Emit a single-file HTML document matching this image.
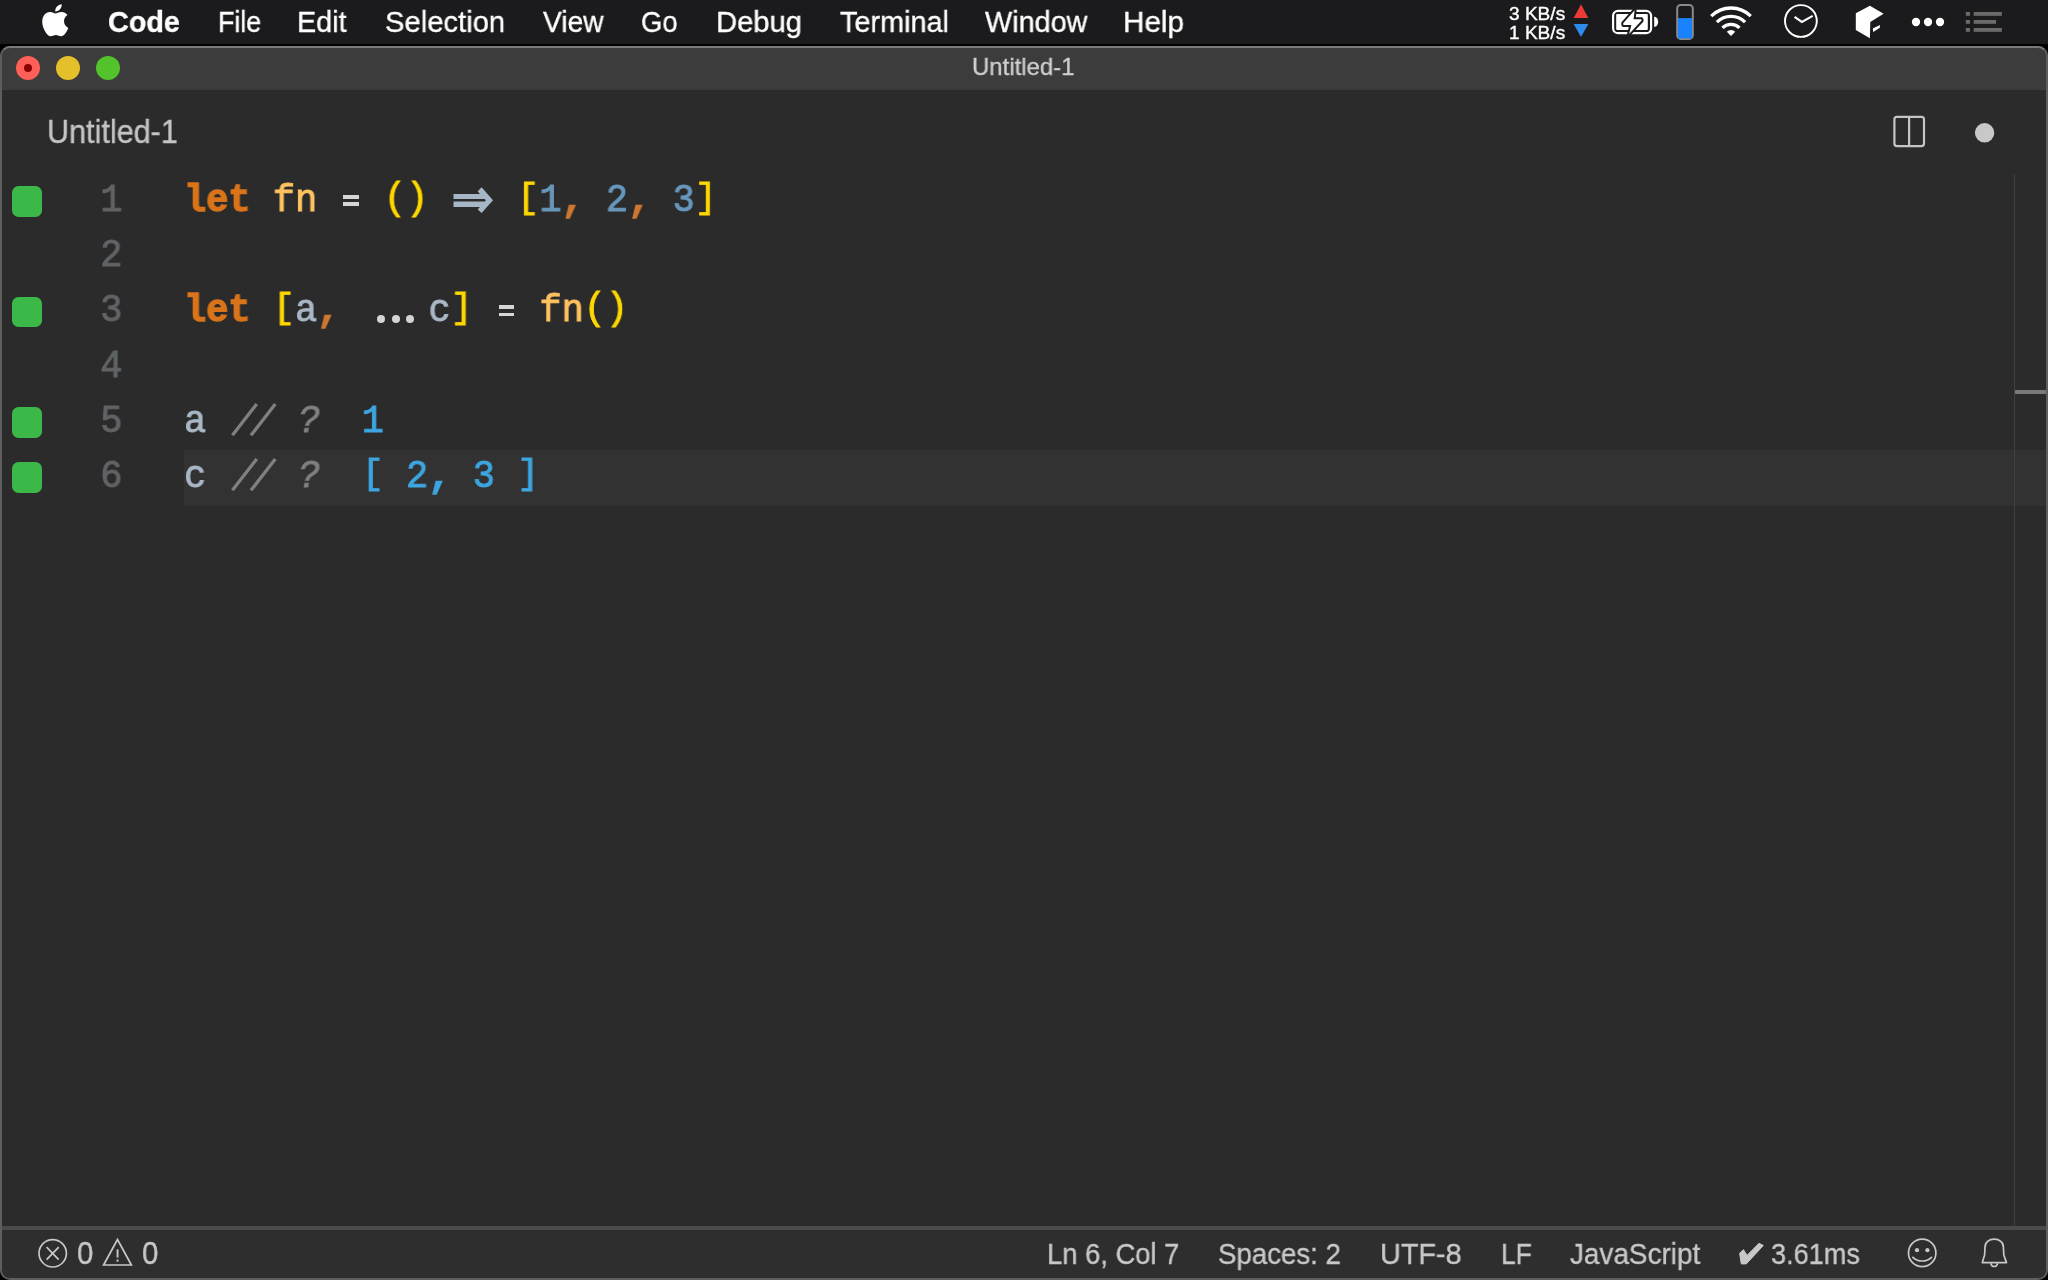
<!DOCTYPE html>
<html><head><meta charset="utf-8"><style>
*{margin:0;padding:0;box-sizing:border-box}
html,body{width:2048px;height:1280px;overflow:hidden;background:#000;font-family:"Liberation Sans",sans-serif}
.abs{position:absolute}
.t{position:absolute;white-space:pre;line-height:1;transform-origin:0 0;will-change:transform;-webkit-text-stroke:0.35px currentColor}
#menubar{position:absolute;left:0;top:0;width:2048px;height:44px;background:#1b1b1d}
#win{position:absolute;left:0;top:46px;width:2048px;height:1234px;border-radius:10px;background:#2b2b2b;overflow:hidden}
#titlebar{position:absolute;left:0;top:0;width:2048px;height:44px;background:#3c3c3c}
.light{position:absolute;width:24px;height:24px;border-radius:50%}
.cl{position:absolute;white-space:pre;line-height:1;font-family:"Liberation Mono",monospace;transform-origin:0 0;-webkit-text-stroke:0.9px currentColor;will-change:transform}
.cl span{-webkit-text-stroke-color:currentColor}
.ln{position:absolute;left:98.5px;width:24px;text-align:right;white-space:pre;line-height:1;font-family:"Liberation Mono",monospace;color:#606366;transform-origin:0 0;-webkit-text-stroke:1px #606366;will-change:transform}
.gs{position:absolute;left:11.9px;width:30.5px;height:30.5px;border-radius:6.5px;background:#3cb848}
.ab{position:absolute}
.dot{position:absolute;width:8px;height:8px;border-radius:50%;background:#d4d4d4}
</style></head><body>
<div id="menubar"></div>
<div style="position:absolute;left:0;top:44px;width:2048px;height:2px;background:#000"></div>
<div id="win">
  <div id="titlebar"></div>
</div>
<!-- window border overlay -->
<div style="position:absolute;left:0;top:46px;width:2048px;height:1234px;border:2px solid #5e5e5e;border-top-color:#7a7a7a;border-radius:10px;pointer-events:none"></div>
<div class="light" style="left:16px;top:56px;background:#fe5f57"></div>
<div style="position:absolute;left:24px;top:64px;width:8px;height:8px;border-radius:50%;background:#8b0000"></div>
<div class="light" style="left:56px;top:56px;background:#e6c02a"></div>
<div class="light" style="left:96px;top:56px;background:#53c22b"></div>
<!-- current line -->
<div class="abs" style="left:184px;top:450.25px;width:1862px;height:55.25px;background:#323232"></div>
<!-- overview ruler -->
<div class="abs" style="left:2014px;top:174px;width:1px;height:1052px;background:#404040"></div>
<div class="abs" style="left:2015px;top:390px;width:31px;height:4px;background:#7a7a7a"></div>
<!-- status bar -->
<div class="abs" style="left:2px;top:1226px;width:2044px;height:4px;background:#4b4b4b"></div>
<div class="abs" style="left:2px;top:1230px;width:2044px;height:48px;background:#2e2e2e;border-radius:0 0 8px 8px"></div>
<div class="abs" style="left:343.10px;top:194.60px;width:15.8px;height:4.3px;background:#d6d6d6"></div>
<div class="abs" style="left:343.10px;top:202.00px;width:15.8px;height:3.9px;background:#d6d6d6"></div>
<svg class="ab" style="left:440px;top:180.00px" width="60" height="40" viewBox="0 0 60 40"><path d="M13.50 14.10L39.90 14.10L37.70 11.25L41.60 7.30L53.00 20.30L41.60 33.00L37.70 29.50L39.90 26.90L13.50 26.90L13.50 21.60L44.70 21.60L45.90 20.25L44.70 18.90L13.50 18.90Z" fill="#a7b6c6"/></svg>
<div class="cl" style="top:181.99px;left:184px;font-size:38px;transform:scaleX(0.9737)"><span style="color:#d9741a;font-weight:bold;-webkit-text-stroke:1.3px #d9741a;">let</span> <span style="color:#ffc460;">fn</span>   <span style="color:#ffd700;position:relative;top:-2px;">()</span> <span>  </span> <span style="color:#ffd700;display:inline-block;transform:translateY(-0.5px) scaleY(0.92);transform-origin:50% 0;">[</span><span style="color:#6897bb;">1</span><span style="color:#cc7832;font-weight:bold;-webkit-text-stroke:1.3px #cc7832;">,</span> <span style="color:#6897bb;">2</span><span style="color:#cc7832;font-weight:bold;-webkit-text-stroke:1.3px #cc7832;">,</span> <span style="color:#6897bb;">3</span><span style="color:#ffd700;display:inline-block;transform:translateY(-0.5px) scaleY(0.92);transform-origin:50% 0;">]</span></div>
<div class="ln" style="top:181.99px;font-size:38px;transform:scaleX(0.9737)">1</div>
<div class="gs" style="top:186.00px"></div>
<div class="cl" style="top:237.24px;left:184px;font-size:38px;transform:scaleX(0.9737)"></div>
<div class="ln" style="top:237.24px;font-size:38px;transform:scaleX(0.9737)">2</div>
<div class="dot" style="left:376.6px;top:314.50px"></div>
<div class="dot" style="left:391.5px;top:314.50px"></div>
<div class="dot" style="left:406.0px;top:314.50px"></div>
<div class="abs" style="left:498.50px;top:305.10px;width:15.8px;height:4.3px;background:#d6d6d6"></div>
<div class="abs" style="left:498.50px;top:312.50px;width:15.8px;height:3.9px;background:#d6d6d6"></div>
<div class="cl" style="top:292.49px;left:184px;font-size:38px;transform:scaleX(0.9737)"><span style="color:#d9741a;font-weight:bold;-webkit-text-stroke:1.3px #d9741a;">let</span> <span style="color:#ffd700;display:inline-block;transform:translateY(-0.5px) scaleY(0.92);transform-origin:50% 0;">[</span><span style="color:#a9b7c6;">a</span><span style="color:#cc7832;font-weight:bold;-webkit-text-stroke:1.3px #cc7832;">,</span> <span>   </span><span style="color:#a9b7c6;">c</span><span style="color:#ffd700;display:inline-block;transform:translateY(-0.5px) scaleY(0.92);transform-origin:50% 0;">]</span>   <span style="color:#ffc460;">fn</span><span style="color:#ffd700;position:relative;top:-2px;">()</span></div>
<div class="ln" style="top:292.49px;font-size:38px;transform:scaleX(0.9737)">3</div>
<div class="gs" style="top:296.50px"></div>
<div class="cl" style="top:347.74px;left:184px;font-size:38px;transform:scaleX(0.9737)"></div>
<div class="ln" style="top:347.74px;font-size:38px;transform:scaleX(0.9737)">4</div>
<svg class="ab" style="left:222.40px;top:395.00px" width="60" height="56" viewBox="0 0 60 56"><path d="M10.4 40.35L34.7 8.95M29 40.35L53.3 8.95" stroke="#808080" stroke-width="3.3" fill="none"/></svg>
<div class="cl" style="top:402.99px;left:184px;font-size:38px;transform:scaleX(0.9737)"><span style="color:#a9b7c6;">a</span>    <span style="color:#808080;font-style:italic;position:relative;left:3px;">?</span>  <span style="color:#3da5e0;">1</span></div>
<div class="ln" style="top:402.99px;font-size:38px;transform:scaleX(0.9737)">5</div>
<div class="gs" style="top:407.00px"></div>
<svg class="ab" style="left:222.40px;top:450.25px" width="60" height="56" viewBox="0 0 60 56"><path d="M10.4 40.35L34.7 8.95M29 40.35L53.3 8.95" stroke="#808080" stroke-width="3.3" fill="none"/></svg>
<div class="cl" style="top:458.24px;left:184px;font-size:38px;transform:scaleX(0.9737)"><span style="color:#a9b7c6;">c</span>    <span style="color:#808080;font-style:italic;position:relative;left:3px;">?</span>  <span style="color:#3da5e0;display:inline-block;transform:translateY(-0.5px) scaleY(0.92);transform-origin:50% 0;">[</span><span style="color:#3da5e0;"> 2</span><span style="color:#3da5e0;font-weight:bold;-webkit-text-stroke:1.3px #3da5e0;">,</span><span style="color:#3da5e0;"> 3 </span><span style="color:#3da5e0;display:inline-block;transform:translateY(-0.5px) scaleY(0.92);transform-origin:50% 0;">]</span></div>
<div class="ln" style="top:458.24px;font-size:38px;transform:scaleX(0.9737)">6</div>
<div class="gs" style="top:462.25px"></div>
<div class="t" style="left:107.80px;top:6.28px;font-size:30.38px;font-weight:bold;color:#ffffff;transform:scaleX(0.9461);">Code</div>
<div class="t" style="left:217.62px;top:6.28px;font-size:30.38px;font-weight:normal;color:#ffffff;transform:scaleX(0.8822);">File</div>
<div class="t" style="left:297.28px;top:6.28px;font-size:30.38px;font-weight:normal;color:#ffffff;transform:scaleX(0.9456);">Edit</div>
<div class="t" style="left:384.64px;top:6.28px;font-size:30.38px;font-weight:normal;color:#ffffff;transform:scaleX(0.9611);">Selection</div>
<div class="t" style="left:543.40px;top:6.28px;font-size:30.38px;font-weight:normal;color:#ffffff;transform:scaleX(0.9282);">View</div>
<div class="t" style="left:641.45px;top:6.28px;font-size:30.38px;font-weight:normal;color:#ffffff;transform:scaleX(0.8998);">Go</div>
<div class="t" style="left:715.60px;top:6.28px;font-size:30.38px;font-weight:normal;color:#ffffff;transform:scaleX(0.9609);">Debug</div>
<div class="t" style="left:839.68px;top:6.28px;font-size:30.38px;font-weight:normal;color:#ffffff;transform:scaleX(0.9490);">Terminal</div>
<div class="t" style="left:984.70px;top:6.28px;font-size:30.38px;font-weight:normal;color:#ffffff;transform:scaleX(0.9483);">Window</div>
<div class="t" style="left:1122.75px;top:6.28px;font-size:30.38px;font-weight:normal;color:#ffffff;transform:scaleX(0.9773);">Help</div>
<div class="t" style="left:1508.90px;top:5.14px;font-size:18.02px;font-weight:normal;color:#ffffff;transform:scaleX(1.0585);">3 KB/s</div>
<div class="t" style="left:1508.90px;top:23.74px;font-size:18.02px;font-weight:normal;color:#ffffff;transform:scaleX(1.0585);">1 KB/s</div>
<div class="t" style="left:972.00px;top:55.28px;font-size:24.71px;font-weight:normal;color:#cfcfcf;transform:scaleX(0.9697);">Untitled-1</div>
<div class="t" style="left:47.20px;top:116.43px;font-size:32.56px;font-weight:normal;color:#c4c4c4;transform:scaleX(0.9391);">Untitled-1</div>
<div class="t" style="left:1047.09px;top:1238.99px;font-size:29.65px;font-weight:normal;color:#c8c8c8;transform:scaleX(0.9233);">Ln 6, Col 7</div>
<div class="t" style="left:1218.30px;top:1238.99px;font-size:29.65px;font-weight:normal;color:#c8c8c8;transform:scaleX(0.9329);">Spaces: 2</div>
<div class="t" style="left:1379.92px;top:1238.99px;font-size:29.65px;font-weight:normal;color:#c8c8c8;transform:scaleX(0.9719);">UTF-8</div>
<div class="t" style="left:1500.62px;top:1238.99px;font-size:29.65px;font-weight:normal;color:#c8c8c8;transform:scaleX(0.8902);">LF</div>
<div class="t" style="left:1570.00px;top:1238.99px;font-size:29.65px;font-weight:normal;color:#c8c8c8;transform:scaleX(0.9409);">JavaScript</div>
<div class="t" style="left:1771.00px;top:1238.99px;font-size:29.65px;font-weight:normal;color:#c8c8c8;transform:scaleX(0.9138);">3.61ms</div>
<div class="t" style="left:77.00px;top:1237.99px;font-size:31.54px;font-weight:normal;color:#c8c8c8;transform:scaleX(0.9314);">0</div>
<div class="t" style="left:142.00px;top:1237.99px;font-size:31.54px;font-weight:normal;color:#c8c8c8;transform:scaleX(0.9314);">0</div>

<svg class="abs" style="left:0;top:0" width="2048" height="46" viewBox="0 0 2048 46">
 <g transform="translate(39.3,4.2) scale(1.3333)" fill="#fff"><path d="M12.152 6.896c-.948 0-2.415-1.078-3.96-1.04-2.04.027-3.91 1.183-4.961 3.014-2.117 3.675-.546 9.103 1.519 12.09 1.013 1.454 2.208 3.09 3.792 3.039 1.52-.065 2.09-.987 3.935-.987 1.831 0 2.35.987 3.96.948 1.637-.026 2.676-1.48 3.676-2.948 1.156-1.688 1.636-3.325 1.662-3.415-.039-.013-3.182-1.221-3.22-4.857-.026-3.04 2.48-4.494 2.597-4.559-1.429-2.09-3.623-2.324-4.39-2.376-2-.156-3.675 1.09-4.61 1.09zM15.53 3.83c.843-1.012 1.4-2.427 1.245-3.83-1.207.052-2.662.805-3.532 1.818-.78.896-1.454 2.338-1.273 3.714 1.338.104 2.715-.688 3.559-1.701"/></g>
 <path d="M1581 4.2L1588.3 18H1573.7Z" fill="#ec3a36"/>
 <path d="M1573.7 24H1588.3L1581 37Z" fill="#2d8ceb"/>
 <rect x="1613.1" y="10.8" width="38" height="22.4" rx="5" fill="none" stroke="#fff" stroke-width="2.2"/>
 <rect x="1616.2" y="13.9" width="31.6" height="16.2" rx="1" fill="#fff"/>
 <path d="M1654.2 16.7a4 5.1 0 0 1 0 10.2Z" fill="#fff"/>
 <path d="M1634.6 10.2L1623.2 23.2L1623.4 24.9H1631.4L1629.1 34L1641.6 20.6L1641.4 19.3H1633.6Z" fill="#fff" stroke="#1b1b1d" stroke-width="4" stroke-linejoin="round" paint-order="stroke"/>
 <rect x="1677.2" y="4.9" width="15.6" height="34" rx="3.5" fill="none" stroke="#8a8a8a" stroke-width="2"/>
 <rect x="1678" y="18.1" width="14" height="20.2" fill="#1a82fb"/>
 <g fill="none" stroke="#fff" stroke-width="3.3" stroke-linecap="butt">
  <path d="M1711.2 16.2A28 28 0 0 1 1750.8 16.2"/>
  <path d="M1716.9 22.1A20 20 0 0 1 1745.1 22.1"/>
  <path d="M1722.5 27.9A12 12 0 0 1 1739.5 27.9"/>
 </g>
 <path d="M1731 36L1726.8 31.8A6 6 0 0 1 1735.2 31.8Z" fill="#fff"/>
 <circle cx="1800.9" cy="21" r="15.9" fill="none" stroke="#fff" stroke-width="1.9"/>
 <path d="M1794.6 16.8L1801.9 21.9L1812.7 15.9" fill="none" stroke="#fff" stroke-width="2.1"/>
 <path d="M1869.9 5.8L1883.6 13.7L1870.3 22L1869.9 38.2L1855.8 29.9L1855.8 13.3Z" fill="#fff"/>
 <path d="M1872.8 28.6L1879.9 24.9L1879.9 27.8L1873.2 32Z" fill="#fff"/>
 <circle cx="1916" cy="22" r="4.15" fill="#fff"/><circle cx="1928" cy="22" r="4.15" fill="#fff"/><circle cx="1940" cy="22" r="4.15" fill="#fff"/>
 <g fill="#6b6b6b"><rect x="1965.8" y="12" width="4.2" height="3.8"/><rect x="1973.7" y="12" width="28.2" height="3.8"/>
 <rect x="1965.8" y="20" width="4.2" height="3.8"/><rect x="1973.7" y="20" width="22.4" height="3.8"/>
 <rect x="1965.8" y="28" width="4.2" height="3.8"/><rect x="1973.7" y="28" width="28.2" height="3.8"/></g>
</svg>
<svg class="abs" style="left:1880px;top:105px" width="130" height="55" viewBox="1880 105 130 55">
 <rect x="1894.4" y="116.9" width="29.6" height="29.2" rx="2.5" fill="none" stroke="#c5c5c5" stroke-width="2.2"/>
 <rect x="1908" y="117" width="2.2" height="29" fill="#c5c5c5"/>
 <circle cx="1984.6" cy="132.8" r="9.7" fill="#c8c8c8"/>
</svg>
<svg class="abs" style="left:0;top:1230px" width="2048" height="50" viewBox="0 1230 2048 50">
 <g fill="none" stroke="#c8c8c8" stroke-width="1.7">
 <circle cx="52.7" cy="1253.3" r="13.7"/>
 <path d="M46.6 1247.1L58.7 1259.6M58.7 1247.1L46.6 1259.6"/>
 <path d="M117.5 1239.5L103.6 1265H131.4Z" stroke-linejoin="miter"/>
 <circle cx="1922.2" cy="1252.9" r="13.7"/>
 <path d="M1912.4 1256.8A13.5 13.5 0 0 0 1932 1256.8"/>
 <path d="M1982.3 1262.6H2006.5L2003.8 1255L2003.4 1247.2C2003.4 1242.2 1999.4 1239.2 1994.2 1239.2C1989 1239.2 1985 1242.2 1985 1247.2L1984.6 1255Z" stroke-linejoin="round"/>
 <path d="M1990.9 1263.2A3.3 3.3 0 0 0 1997.5 1263.2"/>
 </g>
 <g fill="#c8c8c8">
 <rect x="116.6" y="1249.3" width="1.9" height="8.3"/><rect x="116.6" y="1259.5" width="1.9" height="2.2"/>
 <circle cx="1917" cy="1250.2" r="2.1"/><circle cx="1927.4" cy="1250.2" r="2.1"/>
 <path d="M1739.6 1253.2L1743.5 1249.7L1747 1255.4L1759 1243.3L1763.3 1245.5L1746.3 1263.9L1741.3 1263.9Z" stroke="#c8c8c8" stroke-width="1" stroke-linejoin="round"/>
 </g>
</svg>

</body></html>
